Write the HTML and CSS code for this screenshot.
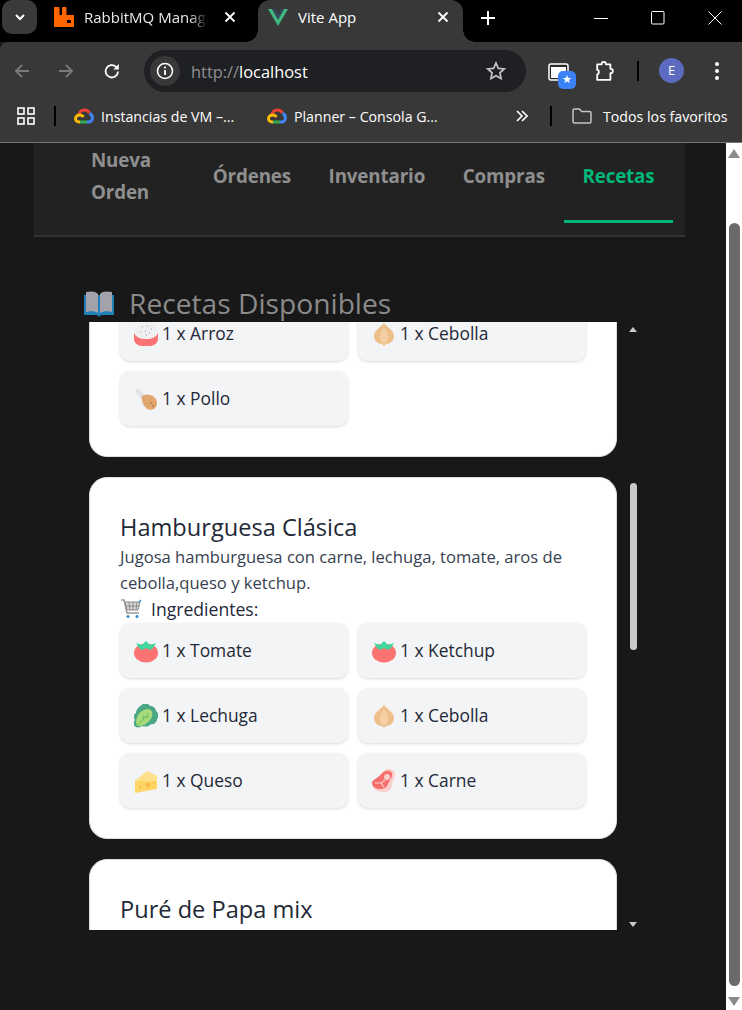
FILE: index.html
```html
<!DOCTYPE html>
<html lang="en">
<head>
    <meta charset="UTF-8">
    <meta name="viewport" content="width=device-width, initial-scale=1.0">
    <title>Vite App</title>
    <link rel="stylesheet" href="styles.css">
</head>
<body>
    <svg class="defs" width="0" height="0">
        <symbol id="tomato" viewBox="0 0 24 24">
            <ellipse cx="12" cy="14" rx="12" ry="9.500" fill="#fb7373"/>
            <path d="M2 4l6 2 4-4 4 4 6-2-3 5-3 2-4-2-4 2-3-2z" fill="#3fd6a0"/>
        </symbol>
        <symbol id="rice" viewBox="0 0 24 24">
            <circle cx="12" cy="11" r="11.500" fill="#f0f0f2"/>
            <path d="M0 11c2 4 6 6 12 6s10-2 12-6v6c0 4-4 7-8 7H8c-4 0-8-3-8-7z" fill="#fb7373"/>
            <path d="M8 5h1M13 4h1M17 7h1M11 9h1M6 10h1M15 11h1M12 13h1" stroke="#9a9aa0" stroke-width="1"/>
        </symbol>
        <symbol id="onion" viewBox="0 0 24 24">
            <path d="M12 0c0 4 10 7 10 14 0 5-4 8-8 8l-2 2-2-2c-4 0-8-3-8-8C2 7 12 4 12 0z" fill="#eebf8a"/>
            <path d="M12 5c-3 4-4 7-4 10 0 3 2 6 4 7 2-1 4-4 4-7 0-3-1-6-4-10z" fill="#f4d0a4"/>
        </symbol>
        <symbol id="chicken" viewBox="0 0 24 24">
            <path d="M1 4l3-3 2 2 5 6-3 3-5-5z" fill="#e3e3e5"/>
            <path d="M8 9c3-2 7-2 11 0 4 3 5 7 3 11-2 3-7 4-10 1-3-3-5-8-4-12z" fill="#e2a670"/>
            <circle cx="17" cy="16" r="1" fill="#b9794a"/>
            <circle cx="19" cy="19" r="1" fill="#b9794a"/>
        </symbol>
        <symbol id="lettuce" viewBox="0 0 24 24">
            <path d="M9 0c3-1 6 0 7 2 3 0 6 2 6 5 3 2 3 6 1 8 0 3-3 6-6 5-2 3-7 3-9 2-2 2-7 2-8-1-1-2 0-4 1-5-2-3-1-6 1-7 0-4 4-7 7-9z" fill="#4aa784"/>
            <path d="M3 22c-2-5 0-12 5-15 3-2 7-2 9-1 2 3 2 7-1 10-3 4-9 7-13 6z" fill="#a8db7c"/>
            <path d="M3 22L15 9M9 15V11M11 13h4" stroke="#6fbb5c" stroke-width="1" fill="none"/>
        </symbol>
        <symbol id="cheese" viewBox="0 0 24 24">
            <path d="M1 12L13 2l10 5v5z" fill="#ffe08a"/>
            <path d="M1 12h22v8L1 24z" fill="#ffd666"/>
            <circle cx="14" cy="16" r="2.500" fill="#f6b94a"/>
            <circle cx="6" cy="18" r="1.200" fill="#f6b94a"/>
            <circle cx="20" cy="13.500" r="1" fill="#f6b94a"/>
        </symbol>
        <symbol id="meat" viewBox="0 0 24 24">
            <path d="M15 0c5-1 9 2 8 7-1 4-3 6-3 9s-3 8-9 7c-6 0-11-3-10-8 0-4 3-5 6-7 3-3 4-7 8-8z" fill="#fbd0cc"/>
            <path d="M14 2c4-1 7 1 6 5-1 3-3 5-4 8s-4 5-8 5c-4 0-8-2-8-6 0-3 4-4 6-6 3-2 4-5 8-6z" fill="#f56f6f"/>
            <circle cx="15" cy="8" r="3" fill="#fbd0cc"/>
            <path d="M3 14l6 0 3 4M9 14l4-3" stroke="#fbd0cc" stroke-width="1.200" fill="none"/>
        </symbol>
        <symbol id="cloud" viewBox="0 0 20 16">
            <path d="M5 7.500C5.300 4.200 7.500 2 10.500 2c2.200 0 4 1.200 5 3" fill="none" stroke="#ea4335" stroke-width="3"/>
            <path d="M15.500 5.500c1.500.6 3 2 3 4.300 0 2.500-2 4.200-4 4.200h-2" fill="none" stroke="#4285f4" stroke-width="3"/>
            <path d="M13 14H5.500" fill="none" stroke="#34a853" stroke-width="3"/>
            <path d="M6 14c-2.500 0-4.500-1.500-4.500-3.500S3.500 7 6 7c1.500 0 2.800.8 3.500 2" fill="none" stroke="#fbbc05" stroke-width="3"/>
        </symbol>
    </svg>

    <div class="tabstrip">
        <div class="tab-search">
            <svg width="14" height="14" viewBox="0 0 14 14"><path d="M3 5l4 4 4-4" fill="none" stroke="#fff" stroke-width="2"/></svg>
        </div>
        <div class="tab">
            <svg class="tab-icon" width="20" height="20" viewBox="0 0 20 20"><path d="M0 1c0-.6.400-1 1-1h3.500c.6 0 1 .4 1 1v7H8V1c0-.6.400-1 1-1h2.500c.6 0 1 .4 1 1v7H19c.6 0 1 .4 1 1v10c0 .6-.4 1-1 1H1c-.6 0-1-.4-1-1z" fill="#ff6600"/><rect x="13" y="13" width="4" height="3" fill="#000"/></svg>
            <span class="tab-title">RabbitMQ Manage</span>
            <svg class="tab-close" width="12" height="12" viewBox="0 0 12 12"><path d="M1.500 1.500l9 9M10.500 1.500l-9 9" stroke="#fff" stroke-width="1.800"/></svg>
        </div>
        <div class="tab tab-active">
            <svg class="tab-icon" width="20" height="17" viewBox="0 0 20 17"><path d="M0 0h4l6 10.500L16 0h4L10 17z" fill="#41b883"/><path d="M4 0h3l3 5.500L13 0h3l-6 10.500z" fill="#35495e"/></svg>
            <span class="tab-title">Vite App</span>
            <svg class="tab-close" width="12" height="12" viewBox="0 0 12 12"><path d="M1.500 1.500l9 9M10.500 1.500l-9 9" stroke="#fff" stroke-width="1.800"/></svg>
        </div>
        <svg class="new-tab" width="14" height="14" viewBox="0 0 14 14"><path d="M7 0v14M0 7h14" stroke="#fff" stroke-width="2"/></svg>
        <div class="window-controls">
            <svg width="14" height="14" viewBox="0 0 14 14"><path d="M0 7.500h14" stroke="#fff"/></svg>
            <svg width="14" height="14" viewBox="0 0 14 14"><rect x=".5" y=".5" width="12.500" height="12.500" rx="1" fill="none" stroke="#fff"/></svg>
            <svg width="14" height="14" viewBox="0 0 14 14"><path d="M.5.500l13 13M13.500.500l-13 13" stroke="#fff"/></svg>
        </div>
    </div>

    <div class="toolbar">
        <svg class="nav-btn" width="20" height="20" viewBox="0 0 20 20"><path d="M17 10H4M10 4l-6 6 6 6" fill="none" stroke="#7b7b7b" stroke-width="1.800"/></svg>
        <svg class="nav-btn" width="20" height="20" viewBox="0 0 20 20"><path d="M3 10h13M10 4l6 6-6 6" fill="none" stroke="#7b7b7b" stroke-width="1.800"/></svg>
        <svg class="nav-btn reload" width="20" height="20" viewBox="0 0 20 20"><path d="M16 10.500a6.200 6.200 0 1 1-1.800-4.600L16 7.500" fill="none" stroke="#fff" stroke-width="1.800"/><path d="M16.800 3v5.500h-5.500z" fill="#fff"/></svg>
        <div class="address">
            <div class="site-info">
                <svg width="18" height="18" viewBox="0 0 18 18"><circle cx="9" cy="9" r="7.500" fill="none" stroke="#fff" stroke-width="1.600"/><path d="M9 8v5" stroke="#fff" stroke-width="1.800"/><circle cx="9" cy="5.500" r="1.100" fill="#fff"/></svg>
            </div>
            <span class="url"><span class="url-scheme">http://</span>localhost</span>
            <svg class="star" width="20" height="20" viewBox="0 0 20 20"><path d="M10 2l2.400 5.400 5.800.6-4.300 3.900 1.200 5.700L10 14.700l-5.100 2.900 1.200-5.700L1.800 8l5.800-.6z" fill="none" stroke="#c4c4c4" stroke-width="1.700"/></svg>
        </div>
        <div class="saved-tabs">
            <svg width="22" height="18" viewBox="0 0 22 18"><rect x="1" y="1" width="19" height="16" rx="2" fill="#2a2a2a" stroke="#fff" stroke-width="1.500"/><rect x="3" y="4" width="15" height="11" fill="#fff"/></svg>
            <span class="saved-badge">★</span>
        </div>
        <svg class="ext" width="22" height="22" viewBox="0 0 20 20"><path d="M2 4h4c0-3 4-3 4 0h4v4c3 0 3 4 0 4v6H2v-5c2 0 2-4 0-4z" fill="none" stroke="#fff" stroke-width="1.600" stroke-linejoin="round"/></svg>
        <span class="sep sep-toolbar"></span>
        <span class="avatar">E</span>
        <svg class="menu" width="6" height="20" viewBox="0 0 6 20"><circle cx="3" cy="3" r="2" fill="#fff"/><circle cx="3" cy="10" r="2" fill="#fff"/><circle cx="3" cy="17" r="2" fill="#fff"/></svg>
    </div>

    <div class="bookmarks">
        <svg class="apps" width="18" height="18" viewBox="0 0 18 18"><g fill="none" stroke="#fff" stroke-width="1.600"><rect x="1" y="1" width="6" height="6"/><rect x="11" y="1" width="6" height="6"/><rect x="1" y="11" width="6" height="6"/><rect x="11" y="11" width="6" height="6"/></g></svg>
        <span class="sep sep-first"></span>
        <div class="bookmark bm-vm"><svg width="20" height="16"><use href="#cloud"/></svg><span>Instancias de VM –...</span></div>
        <div class="bookmark bm-planner"><svg width="20" height="16"><use href="#cloud"/></svg><span>Planner – Consola G...</span></div>
        <svg class="more" width="12" height="12" viewBox="0 0 12 12"><path d="M1 1l5 5-5 5M6 1l5 5-5 5" fill="none" stroke="#fff" stroke-width="1.600"/></svg>
        <span class="sep sep-last"></span>
        <div class="bookmark bm-all">
            <svg width="20" height="16" viewBox="0 0 20 16"><path d="M1 2.500c0-.8.600-1.500 1.500-1.500h5l2 2.500h8c.8 0 1.500.7 1.500 1.500v8.500c0 .8-.7 1.500-1.500 1.500h-15C1.600 15 1 14.300 1 13.500z" fill="none" stroke="#c4c4c4" stroke-width="1.500"/></svg>
            <span>Todos los favoritos</span>
        </div>
    </div>

    <div class="viewport">
        <div class="content">
            <nav class="main-nav">
                <a class="nav-item nav-wrap">Nueva Orden</a>
                <a class="nav-item">Órdenes</a>
                <a class="nav-item">Inventario</a>
                <a class="nav-item">Compras</a>
                <a class="nav-item active">Recetas</a>
            </nav>

            <h2 class="section-title">
                <svg width="30" height="26" viewBox="0 0 30 26"><path d="M0 4h30v20H17l-2 2-2-2H0z" fill="#1f7fb8"/><path d="M2 1c5-1 10-1 12 2v19c-3-2-8-2-12-1z" fill="#a3a1aa"/><path d="M28 1c-5-1-10-1-12 2v19c3-2 8-2 12-1z" fill="#a3a1aa"/></svg>
                <span>Recetas Disponibles</span>
            </h2>

            <div class="recipes-row">
                <div class="recipes">
                    <article class="card card-first">
                        <div class="chips">
                            <div class="chip"><svg width="24" height="24"><use href="#rice"/></svg>1 x Arroz</div>
                            <div class="chip"><svg width="24" height="24"><use href="#onion"/></svg>1 x Cebolla</div>
                            <div class="chip"><svg width="24" height="24"><use href="#chicken"/></svg>1 x Pollo</div>
                        </div>
                    </article>
                    <article class="card">
                        <h3>Hamburguesa Clásica</h3>
                        <p class="desc">Jugosa hamburguesa con carne, lechuga, tomate, aros de cebolla,queso y ketchup.</p>
                        <div class="ingredients-label">
                            <svg width="22" height="20" viewBox="0 0 22 20"><path d="M1 1h3l3 13h12" fill="none" stroke="#9a9a9a" stroke-width="1.500"/><path d="M5 3h15l-2 8H7z" fill="#d9d9d9" stroke="#8a8a8a"/><path d="M9 3l1 8M13 3v8M17 3l-1 8M6 7h13" stroke="#8a8a8a"/><circle cx="8" cy="17.500" r="1.500" fill="#2b8ccb"/><circle cx="17" cy="17.500" r="1.500" fill="#2b8ccb"/><path d="M19 3l2-2" stroke="#2b8ccb" stroke-width="1.500"/></svg>
                            <span>Ingredientes:</span>
                        </div>
                        <div class="chips">
                            <div class="chip"><svg width="24" height="24"><use href="#tomato"/></svg>1 x Tomate</div>
                            <div class="chip"><svg width="24" height="24"><use href="#tomato"/></svg>1 x Ketchup</div>
                            <div class="chip"><svg width="24" height="24"><use href="#lettuce"/></svg>1 x Lechuga</div>
                            <div class="chip"><svg width="24" height="24"><use href="#onion"/></svg>1 x Cebolla</div>
                            <div class="chip"><svg width="24" height="24"><use href="#cheese"/></svg>1 x Queso</div>
                            <div class="chip"><svg width="24" height="24"><use href="#meat"/></svg>1 x Carne</div>
                        </div>
                    </article>
                    <article class="card">
                        <h3>Puré de Papa mix</h3>
                    </article>
                </div>
                <div class="list-scrollbar">
                    <span class="arrow-up"></span>
                    <span class="list-thumb"></span>
                    <span class="arrow-down"></span>
                </div>
            </div>
        </div>

        <div class="page-scrollbar">
            <span class="page-arrow-up"></span>
            <span class="page-thumb"></span>
            <span class="page-arrow-down"></span>
        </div>
    </div>
</body>
</html>
```

FILE: styles.css
```css
* {
    box-sizing: border-box;
}

html, body {
    margin: 0;
    height: 1010px;
    overflow: hidden;
}

body {
    font-family: 'Open Sans', 'Noto Sans', Arial, sans-serif;
    background: #181818;
    display: flex;
    flex-direction: column;
}

.defs {
    position: absolute;
}

/* browser frame */
.tabstrip {
    height: 42px;
    flex: none;
    background: #000;
    display: flex;
    align-items: flex-start;
    color: #fff;
    font-size: 15px;
}

.tab-search {
    width: 35px;
    height: 34px;
    margin-left: 2px;
    background: #3a3a3a;
    border-radius: 10px;
    display: flex;
    align-items: center;
    justify-content: center;
}

.tab {
    width: 221px;
    height: 42px;
    display: flex;
    align-items: center;
    padding: 0 22px 8px 17px;
    position: relative;
}

.tab-active {
    width: 205px;
    padding: 0 14px 8px 10px;
    background: #383838;
    border-radius: 12px 12px 0 0;
}

.tab-active::before,
.tab-active::after {
    content: "";
    position: absolute;
    bottom: 0;
    width: 12px;
    height: 12px;
}

.tab-active::before {
    left: -12px;
    background: radial-gradient(circle at 0 0, #000 11.500px, #383838 12px);
}

.tab-active::after {
    right: -12px;
    background: radial-gradient(circle at 100% 0, #000 11.500px, #383838 12px);
}

.tab-icon {
    flex: none;
    margin-right: 10px;
}

.tab-title {
    flex: 1;
    white-space: nowrap;
    overflow: hidden;
}

.tab:not(.tab-active) .tab-title {
    max-width: 124px;
    margin-right: 16px;
    color: #e8e8e8;
    -webkit-mask-image: linear-gradient(90deg, #000 85%, transparent);
    mask-image: linear-gradient(90deg, #000 85%, transparent);
}

.tab-close {
    flex: none;
}

.new-tab {
    margin: 11px 0 0 18px;
}

.window-controls {
    margin: 11px 0 0 auto;
    padding-right: 20px;
    display: flex;
    gap: 43px;
}

.toolbar {
    height: 50px;
    flex: none;
    padding: 8px 0 0 12px;
    background: #383838;
    display: flex;
    align-items: flex-start;
    border-radius: 8px 0 0 0;
}

.nav-btn {
    margin: 11px 24px 0 0;
}

.reload {
    margin-left: 2px;
}

.address {
    width: 382px;
    height: 42px;
    margin-left: -2px;
    padding: 0 20px 0 6px;
    background: #1f2023;
    border-radius: 21px;
    display: flex;
    align-items: center;
    color: #fff;
    font-size: 16.400px;
}

.site-info {
    width: 30px;
    height: 30px;
    border-radius: 50%;
    background: #383838;
    display: flex;
    align-items: center;
    justify-content: center;
    margin-right: 11px;
}

.url {
    flex: 1;
}

.url-scheme {
    color: #8f8f8f;
}

.saved-tabs {
    width: 24px;
    height: 26px;
    margin: 13px 0 0 22px;
    position: relative;
}

.saved-badge {
    position: absolute;
    left: 10px;
    top: 8px;
    width: 18px;
    height: 18px;
    border-radius: 5px;
    background: #3b82f6;
    color: #fff;
    font: 11px/18px 'DejaVu Sans', sans-serif;
    text-align: center;
}

.ext {
    margin: 10px 0 0 23px;
}

.sep {
    display: block;
    width: 2px;
    background: #000;
    flex: none;
}

.sep-toolbar {
    height: 20px;
    margin: 11px 0 0 20px;
}

.avatar {
    width: 25px;
    height: 25px;
    margin: 8px 0 0 20px;
    border-radius: 50%;
    background: #5c6bc0;
    color: #fff;
    font-size: 13px;
    line-height: 25px;
    text-align: center;
}

.menu {
    margin: 11px 0 0 30px;
}

.bookmarks {
    height: 51px;
    flex: none;
    padding-bottom: 2px;
    background: #383838;
    border-bottom: 1px solid #777;
    display: flex;
    align-items: center;
    color: #fff;
    font-size: 14.200px;
}

.apps {
    margin-left: 17px;
}

.sep-first {
    height: 20px;
    margin-left: 19px;
}

.bookmark {
    display: flex;
    align-items: center;
    gap: 7px;
    white-space: nowrap;
}

.bm-vm {
    width: 193px;
    margin-left: 18px;
}

.bm-planner {
    width: 249px;
}

.sep-last {
    height: 20px;
    margin-left: 22px;
}

.bm-all {
    margin-left: 20px;
    gap: 11px;
}

/* page */
.viewport {
    flex: 1;
    display: flex;
    min-height: 0;
}

.content {
    width: 726px;
    flex: none;
    padding-left: 34px;
}

.main-nav {
    width: 651px;
    height: 94px;
    padding: 0 0 12px 38px;
    background: #222;
    border-bottom: 2px solid #333;
    display: flex;
    align-items: stretch;
}

.nav-item {
    padding: 0 18.800px 12px;
    color: #8f8f8f;
    font-size: 18.800px;
    font-weight: 700;
    line-height: 32px;
    display: flex;
    align-items: center;
    letter-spacing: -.15px;
    border-bottom: 3px solid transparent;
}

.nav-wrap {
    width: 122px;
    padding-left: 19px;
    padding-right: 44px;
}

.active {
    color: #00b877;
    border-bottom-color: #00b877;
}

.section-title {
    margin: 46px 0 0 50px;
    height: 39px;
    display: flex;
    align-items: center;
    gap: 15px;
    color: #8a8a8a;
    font-size: 28.200px;
    font-weight: 400;
}

.section-title svg {
    margin-top: 3px;
}

.recipes-row {
    display: flex;
    height: 608px;
}

.recipes {
    width: 528px;
    margin-left: 55px;
    overflow: hidden;
    display: flex;
    flex-direction: column;
    gap: 20px;
}

.card {
    flex: none;
    padding: 36px 30px 30px;
    background: #fff;
    border: 1px solid #ddd;
    border-radius: 18px;
}

.card-first {
    margin-top: -17px;
    padding: 0 30px 30px;
}

.card h3 {
    margin: 0 0 2px;
    color: #1f2937;
    font-size: 23.600px;
    line-height: 26px;
    padding-bottom: 2px;
    font-weight: 400;
}

.desc {
    margin: 0;
    color: #374151;
    font-size: 16.600px;
    line-height: 26px;
}

.ingredients-label {
    display: flex;
    align-items: center;
    gap: 9px;
    height: 26px;
    margin-bottom: 1px;
    color: #1f2937;
    font-size: 17.600px;
}

.chips {
    display: grid;
    grid-template-columns: 228px 228px;
    gap: 10px;
}

.chip {
    height: 55px;
    padding: 0 14px 2px;
    display: flex;
    align-items: center;
    gap: 4px;
    background: #f3f4f6;
    border-radius: 10px;
    box-shadow: 0 1px 3px rgba(0,0,0,0.15);
    color: #1f2937;
    font-size: 17.400px;
}

.chip svg {
    margin-top: 2px;
}

.list-scrollbar {
    width: 8px;
    margin-left: 12px;
    display: flex;
    flex-direction: column;
    align-items: center;
}

.arrow-up,
.arrow-down {
    width: 0;
    height: 0;
    border-left: 4.500px solid transparent;
    border-right: 4.500px solid transparent;
}

.arrow-up {
    margin-top: 5px;
    border-bottom: 5px solid #c8c8c8;
}

.arrow-down {
    margin-top: auto;
    margin-bottom: 3px;
    border-top: 5px solid #c8c8c8;
}

.list-thumb {
    width: 7px;
    height: 167px;
    margin-top: 151px;
    background: #c9c9c9;
    border-radius: 4px;
}

.page-scrollbar {
    width: 16px;
    flex: none;
    background: #fff;
    display: flex;
    flex-direction: column;
    align-items: center;
}

.page-arrow-up,
.page-arrow-down {
    width: 0;
    height: 0;
    border-left: 6px solid transparent;
    border-right: 6px solid transparent;
}

.page-arrow-up {
    margin-top: 6px;
    border-bottom: 9px solid #8b8b8b;
}

.page-thumb {
    width: 11px;
    height: 763px;
    margin-top: 65px;
    background: #6a6a6a;
    border-radius: 6px;
}

.page-arrow-down {
    margin-top: 11px;
    border-top: 9px solid #8b8b8b;
}
```
